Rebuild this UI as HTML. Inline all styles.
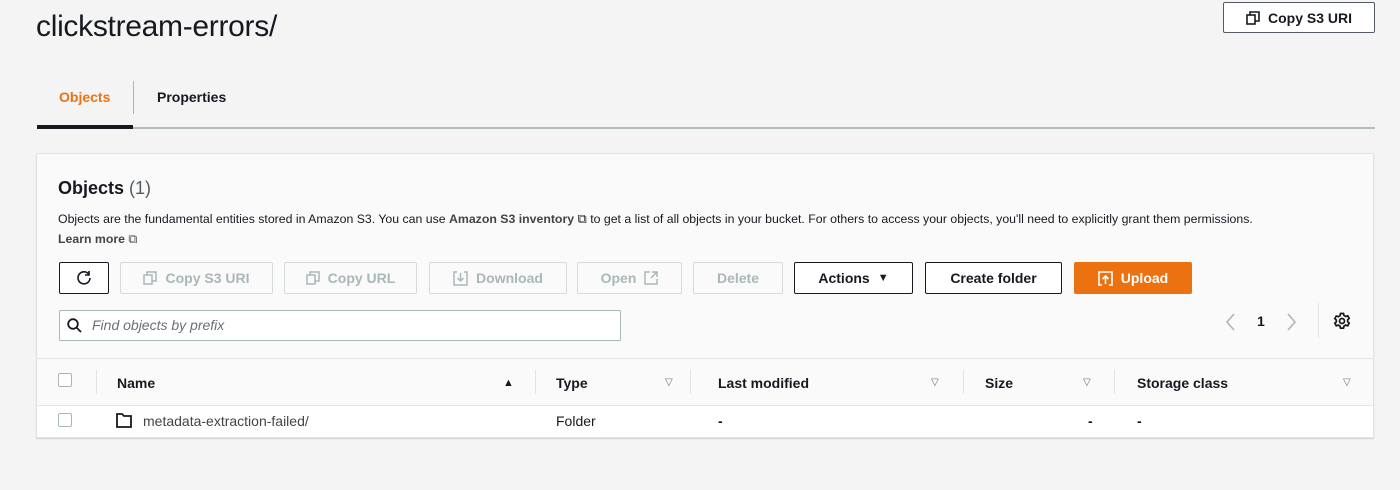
<!DOCTYPE html>
<html><head><meta charset="utf-8"><style>
*{box-sizing:border-box;margin:0;padding:0}
body{width:1400px;height:490px;background:#f4f4f4;font-family:"Liberation Sans",sans-serif;color:#16191f;position:relative;overflow:hidden}
.a{position:absolute;white-space:nowrap}
.btn{position:absolute;height:32px;border:1px solid #545b64;border-radius:2px;background:#fff;font-weight:bold;font-size:14px;display:flex;align-items:center;justify-content:center;gap:8px;color:#16191f}
.dis{border-color:#d5dbdb;color:#aab7b8;background:#fafafa}
.vl{position:absolute;width:1px;background:#e4e4e4}
.th{position:absolute;top:375px;font-weight:bold;font-size:14px}
.tri{position:absolute;top:377px;font-size:10px;color:#687078}
.cb{position:absolute;width:14px;height:14px;border:1px solid #aab7b8;border-radius:2px;background:#fff}
svg{display:block}
</style></head><body>
<div class="a" style="left:36px;top:10px;font-size:30px;color:#16191f;letter-spacing:-0.3px">clickstream-errors/</div>
<div class="btn" style="left:1223px;top:2px;width:152px;height:31px;border-color:#545b64">
<svg width="14" height="14" viewBox="0 0 14 14" fill="none" stroke="#16191f" stroke-width="1.6"><rect x="1" y="4" width="8" height="9"/><path d="M4 4V1h9v9h-4"/></svg>Copy S3 URI</div>
<div class="a" style="left:59px;top:89px;font-size:14px;font-weight:bold;color:#ec7211">Objects</div>
<div class="a" style="left:133px;top:81px;width:1px;height:33px;background:#aab7b8"></div>
<div class="a" style="left:157px;top:89px;font-size:14px;font-weight:bold;color:#16191f">Properties</div>
<div class="a" style="left:37px;top:127px;width:1338px;height:2px;background:#b5bcbc"></div>
<div class="a" style="left:37px;top:125px;width:96px;height:4px;background:#16191f"></div>

<div class="a" style="left:36px;top:153px;width:1338px;height:285px;background:#fafafa;border:1px solid #e1e4e4;box-shadow:0 1px 1px rgba(0,0,0,.15)"></div>
<div class="a" style="left:58px;top:178px;font-size:18px;font-weight:bold">Objects <span style="font-weight:normal;color:#545b64">(1)</span></div>
<div class="a" style="left:58px;top:211px;font-size:12.3px;color:#16191f">Objects are the fundamental entities stored in Amazon S3. You can use <b style="color:#444">Amazon S3 inventory</b> <span style="font-size:13px">⧉</span> to get a list of all objects in your bucket. For others to access your objects, you'll need to explicitly grant them permissions.</div>
<div class="a" style="left:58px;top:232px;font-size:12.3px;font-weight:bold;color:#444">Learn more <span style="font-weight:normal">⧉</span></div>

<div class="btn" style="left:59px;top:262px;width:50px;border-color:#16191f">
<svg width="18" height="18" viewBox="0 0 18 18" fill="none" stroke="#16191f" stroke-width="1.6"><path d="M14 5.5A6 6 0 1 0 15 9"/><path d="M14 2v4h-4"/></svg></div>
<div class="btn dis" style="left:120px;top:262px;width:153px"><svg width="14" height="14" viewBox="0 0 14 14" fill="none" stroke="#aab7b8" stroke-width="1.5"><rect x="1" y="4" width="8" height="9"/><path d="M4 4V1h9v9h-4"/></svg>Copy S3 URI</div>
<div class="btn dis" style="left:284px;top:262px;width:133px"><svg width="14" height="14" viewBox="0 0 14 14" fill="none" stroke="#aab7b8" stroke-width="1.5"><rect x="1" y="4" width="8" height="9"/><path d="M4 4V1h9v9h-4"/></svg>Copy URL</div>
<div class="btn dis" style="left:429px;top:262px;width:138px"><svg width="15" height="15" viewBox="0 0 15 15" fill="none" stroke="#aab7b8" stroke-width="1.5"><path d="M4 1H1v13h13V1h-3M7.5 2v8M4.5 7l3 3 3-3"/></svg>Download</div>
<div class="btn dis" style="left:577px;top:262px;width:105px">Open <svg width="14" height="14" viewBox="0 0 14 14" fill="none" stroke="#aab7b8" stroke-width="1.5"><path d="M6 1H1v12h12V8M8 1h5v5M13 1L7 7"/></svg></div>
<div class="btn dis" style="left:693px;top:262px;width:90px">Delete</div>
<div class="btn" style="left:794px;top:262px;width:119px;border-color:#16191f">Actions <span style="font-size:11px">▼</span></div>
<div class="btn" style="left:925px;top:262px;width:137px;border-color:#16191f">Create folder</div>
<div class="btn" style="left:1074px;top:262px;width:118px;background:#ec7211;border-color:#ec7211;color:#fff"><svg width="15" height="15" viewBox="0 0 15 15" fill="none" stroke="#fff" stroke-width="1.6"><path d="M4 14H1V1h13v13h-3M7.5 13V5M4.5 8l3-3 3 3"/></svg>Upload</div>

<div class="a" style="left:59px;top:310px;width:562px;height:31px;border:1px solid #aab7b8;border-radius:2px;background:#fff"></div>
<svg class="a" style="left:67px;top:318px" width="15" height="15" viewBox="0 0 15 15" fill="none" stroke="#16191f" stroke-width="1.8"><circle cx="6" cy="6" r="4.8"/><path d="M9.5 9.5L14 14"/></svg>
<div class="a" style="left:92px;top:317px;font-size:14px;font-style:italic;color:#687078">Find objects by prefix</div>

<svg class="a" style="left:1224px;top:313px" width="12" height="18" viewBox="0 0 12 18" fill="none" stroke="#aab7b8" stroke-width="1.6"><path d="M10 1L3 9l7 8"/></svg>
<div class="a" style="left:1257px;top:313px;font-size:14px;font-weight:bold">1</div>
<svg class="a" style="left:1286px;top:313px" width="12" height="18" viewBox="0 0 12 18" fill="none" stroke="#aab7b8" stroke-width="1.6"><path d="M2 1l7 8-7 8"/></svg>
<div class="a" style="left:1318px;top:303px;width:1px;height:35px;background:#e4e4e4"></div>
<svg class="a" style="left:1333px;top:312px" width="18" height="18" viewBox="0 0 18 18" fill="none" stroke="#16191f" stroke-width="1.7"><circle cx="9" cy="9" r="2.5"/><path d="M7.5 1.5h3l.5 2 1.7 1 2-.7 1.5 2.6-1.5 1.4v2l1.5 1.4-1.5 2.6-2-.7-1.7 1-.5 2h-3l-.5-2-1.7-1-2 .7-1.5-2.6L3.3 10V8L1.8 6.6l1.5-2.6 2 .7 1.7-1z"/></svg>

<div class="a" style="left:37px;top:358px;width:1336px;height:1px;background:#e4e4e4"></div>
<div class="a" style="left:37px;top:405px;width:1336px;height:32px;background:#fff"></div>
<div class="a" style="left:37px;top:405px;width:1336px;height:1px;background:#e4e4e4"></div>
<div class="cb" style="left:58px;top:373px"></div>
<div class="vl" style="left:96px;top:370px;height:24px"></div>
<div class="th" style="left:117px">Name</div><div class="tri" style="left:503px;color:#16191f;font-size:11px">▲</div>
<div class="vl" style="left:535px;top:370px;height:24px"></div>
<div class="th" style="left:556px">Type</div><div class="tri" style="left:665px">▽</div>
<div class="vl" style="left:690px;top:370px;height:24px"></div>
<div class="th" style="left:718px">Last modified</div><div class="tri" style="left:931px">▽</div>
<div class="vl" style="left:963px;top:370px;height:24px"></div>
<div class="th" style="left:985px">Size</div><div class="tri" style="left:1083px">▽</div>
<div class="vl" style="left:1114px;top:370px;height:24px"></div>
<div class="th" style="left:1137px">Storage class</div><div class="tri" style="left:1343px">▽</div>

<div class="cb" style="left:58px;top:413px"></div>
<svg class="a" style="left:116px;top:413px" width="16" height="15" viewBox="0 0 16 15" fill="none" stroke="#16191f" stroke-width="1.8"><path d="M1 1h5l2 2h7v11H1z"/></svg>
<div class="a" style="left:143px;top:413px;font-size:14px;color:#444">metadata-extraction-failed/</div>
<div class="a" style="left:556px;top:413px;font-size:14px">Folder</div>
<div class="a" style="left:718px;top:413px;font-size:14px;font-weight:bold">-</div>
<div class="a" style="left:1088px;top:413px;font-size:14px;font-weight:bold">-</div>
<div class="a" style="left:1137px;top:413px;font-size:14px;font-weight:bold">-</div>
</body></html>
